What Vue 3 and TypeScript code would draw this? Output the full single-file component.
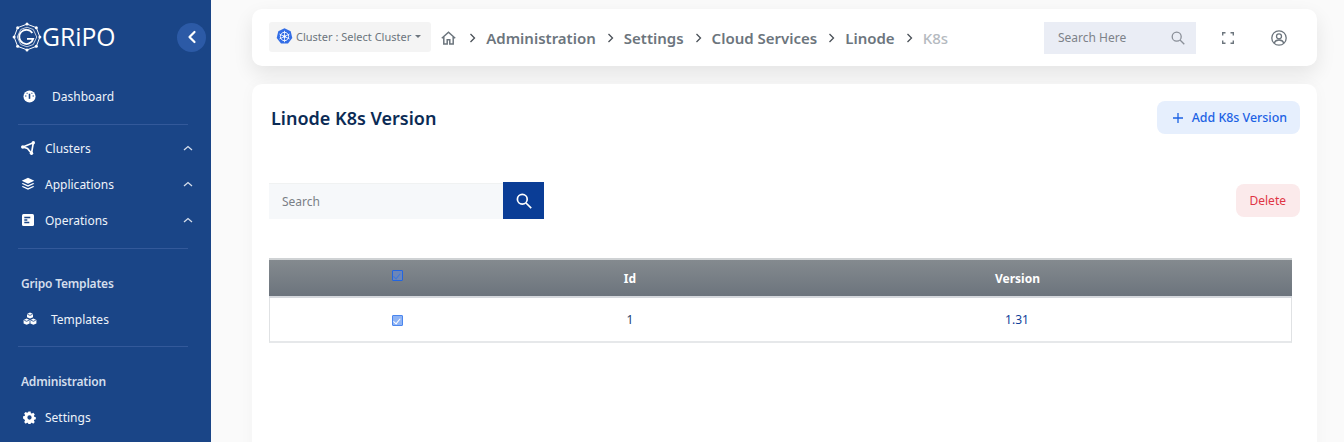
<template>
  <div class="app-shell">
    <aside class="sidebar">
      <div class="brand">
        <div class="logo">
          <svg width="32" height="32" viewBox="0 0 36 36" fill="none" stroke="#fff">
            <path d="M18 3.500 28.500 7.500 32.500 18 28.500 28.500 18 32.500 7.500 28.500 3.500 18 7.500 7.500Z" stroke-width="1.100" />
            <path d="M18 7 25 9.500 29 18 25 26.500 18 29 11 26.500 7 18 11 9.500Z" stroke-width="1" opacity=".8" />
            <path d="M24 13.500A8 8 0 1 0 25 20H18" stroke-width="2" />
            <g fill="#fff" stroke="none">
              <circle cx="18" cy="3.500" r="1.700" />
              <circle cx="28.500" cy="7.500" r="1.700" />
              <circle cx="32.500" cy="18" r="1.700" />
              <circle cx="28.500" cy="28.500" r="1.700" />
              <circle cx="18" cy="32.500" r="1.700" />
              <circle cx="7.500" cy="28.500" r="1.700" />
              <circle cx="3.500" cy="18" r="1.700" />
              <circle cx="7.500" cy="7.500" r="1.700" />
            </g>
          </svg>
          <span class="logo-text">GRiPO</span>
        </div>
        <button class="collapse">
          <svg width="12" height="14" viewBox="0 0 12 14" fill="none" stroke="#fff" stroke-width="2.200" stroke-linecap="round" stroke-linejoin="round">
            <path d="M8.500 2 3.500 7l5 5" />
          </svg>
        </button>
      </div>

      <div class="nav-item dashboard">
        <svg class="nav-icon" viewBox="0 0 14 14">
          <circle cx="7" cy="7" r="6.500" fill="#fff" />
          <path d="M7 9.500V4" stroke="#1a4587" stroke-width="1.700" />
          <path d="M2.200 6.500h1.500M10.300 6.500h1.500M4 3.200l.8.8M10 3.200l-.8.8" stroke="#1a4587" stroke-width="1.100" />
        </svg>
        <span>Dashboard</span>
      </div>
      <div class="divider"></div>

      <div class="nav-group">
        <div class="nav-item" v-for="item in groups" :key="item.label">
          <svg class="nav-icon small" viewBox="0 0 14 14" v-html="item.icon"></svg>
          <span>{{ item.label }}</span>
          <svg class="chevron" width="10" height="6" viewBox="0 0 10 6" fill="none" stroke="#d5deeb" stroke-width="1.300">
            <path d="M1 5 5 1.500 9 5" />
          </svg>
        </div>
      </div>
      <div class="divider second"></div>

      <div class="section-title">Gripo Templates</div>
      <div class="nav-item sub">
        <svg class="nav-icon" viewBox="0 0 14 14" fill="#fff">
          <path d="M7 .6l3 1.300v3.300L7 6.500 4 5.200V1.900Z" />
          <path d="M3.600 6.600l3 1.300v3.500l-3 1.300-3-1.300V7.900Z" />
          <path d="M10.400 6.600l3 1.300v3.500l-3 1.300-3-1.300V7.900Z" />
          <path d="M4.300 2.200 7 3.400l2.700-1.200M1.200 8.200l2.400 1.100L6 8.200M8 8.200l2.400 1.100 2.400-1.100" stroke="#1a4587" stroke-width=".8" fill="none" />
        </svg>
        <span>Templates</span>
      </div>
      <div class="divider third"></div>

      <div class="section-title admin">Administration</div>
      <div class="nav-item sub settings">
        <svg class="nav-icon" viewBox="0 0 14 14">
          <path fill="#fff" fill-rule="evenodd" d="M5.800 .6h2.400l.3 1.700 1.100.5 1.500-.9 1.600 1.800-1 1.400.4 1.200 1.700.3v2.400l-1.700.3-.4 1.100 1 1.500-1.700 1.700-1.400-1-1.200.4-.2 1.700H5.800l-.3-1.700-1.100-.4-1.500 1-1.700-1.700 1-1.500-.4-1.100L.1 8.100V5.700l1.700-.3.400-1.200-1-1.400 1.700-1.800 1.500.9 1.100-.5ZM7 4.700a2.300 2.300 0 1 0 0 4.600 2.300 2.300 0 0 0 0-4.600Z" />
        </svg>
        <span>Settings</span>
      </div>
    </aside>

    <main class="content">
      <header class="topbar">
        <div class="cluster">
          <svg class="k8s" width="17" height="17" viewBox="0 0 17 17">
            <path d="M8.500.3l6.200 3 1.600 6.700-4.300 5.600H5L.7 10l1.600-6.700Z" fill="#326de6" />
            <circle cx="8.500" cy="8.500" r="4.200" fill="none" stroke="#fff" stroke-width=".9" />
            <path d="M8.500 2.800v11.400M3.400 6l10.200 5M13.600 6 3.400 11" stroke="#fff" stroke-width=".8" />
            <circle cx="8.500" cy="8.500" r="1.300" fill="#fff" />
          </svg>
          <span>Cluster : Select Cluster</span>
          <i class="caret"></i>
        </div>
        <nav class="crumbs">
          <svg class="home" width="15" height="14" viewBox="0 0 15 14" fill="none" stroke="#6c757d" stroke-width="1.500">
            <path d="M.8 7.200 7.500 1.200l6.700 6" />
            <path d="M2.800 6v7h3.400V8.700h2.600V13h3.400V6" />
          </svg>
          <template v-for="(crumb, i) in crumbs" :key="crumb">
            <svg class="sep" width="7" height="10" viewBox="0 0 7 10" fill="none" stroke="#495057" stroke-width="1.300">
              <path d="M1.500 1 5.500 5l-4 4" />
            </svg>
            <span :class="{ last: i === crumbs.length - 1 }">{{ crumb }}</span>
          </template>
        </nav>
        <div class="top-search">
          <span>Search Here</span>
          <svg width="14" height="14" viewBox="0 0 14 14" fill="none" stroke="#8a8f98" stroke-width="1.300">
            <circle cx="5.700" cy="5.700" r="4.500" />
            <path d="m9 9 4.300 4.300" />
          </svg>
        </div>
        <svg class="fullscreen" width="12" height="12" viewBox="0 0 12 12" fill="none" stroke="#6c757d" stroke-width="1.400">
          <path d="M.7 3.500V.7h2.800M8.500.7h2.800v2.800M11.300 8.500v2.800H8.500M3.500 11.300H.7V8.500" />
        </svg>
        <svg class="user" width="16" height="16" viewBox="0 0 16 16" fill="none" stroke="#6c757d" stroke-width="1.300">
          <circle cx="8" cy="8" r="7.200" />
          <circle cx="8" cy="6.300" r="2.500" />
          <path d="M3.200 13c.8-2 2.600-3 4.800-3s4 1 4.800 3" />
        </svg>
      </header>

      <section class="card">
        <div class="card-head">
          <h1>Linode K8s Version</h1>
          <button class="btn-add">
            <svg class="plus" width="10" height="10" viewBox="0 0 10 10" stroke="#1c62e4" stroke-width="1.300">
              <path d="M5 0v10M0 5h10" />
            </svg>
            Add K8s Version
          </button>
        </div>
        <div class="tools">
          <div class="search-box">
            <div class="search-input">Search</div>
            <button class="search-btn">
              <svg width="16" height="16" viewBox="0 0 16 16" fill="none" stroke="#fff" stroke-width="1.700">
                <circle cx="6.300" cy="6.300" r="4.900" />
                <path d="m10 10 5.200 5.200" />
              </svg>
            </button>
          </div>
          <button class="btn-delete">Delete</button>
        </div>
        <table class="grid">
          <thead>
            <tr>
              <th class="col-check"><i class="check head-check"></i></th>
              <th class="col-id">Id</th>
              <th class="col-version">Version</th>
            </tr>
          </thead>
          <tbody>
            <tr v-for="row in rows" :key="row.id">
              <td><i class="check"></i></td>
              <td class="id">{{ row.id }}</td>
              <td class="version">{{ row.version }}</td>
            </tr>
          </tbody>
        </table>
      </section>
    </main>
  </div>
</template>

<script setup lang="ts">
const groups = [
  {
    label: 'Clusters',
    icon: '<path d="M1.800 6 12.300 1.800 10.500 12.300 6.500 7.500Z" fill="none" stroke="#fff" stroke-width="1.700"/><circle cx="1.800" cy="6" r="1.700" fill="#fff"/><circle cx="12.300" cy="1.800" r="1.700" fill="#fff"/><circle cx="10.500" cy="12.300" r="1.700" fill="#fff"/>'
  },
  {
    label: 'Applications',
    icon: '<path d="M7 .8l6.300 3L7 6.800.7 3.800Z" fill="#fff"/><path d="M1.900 5.900 7 8.300l5.100-2.400 1.200.9L7 9.800.7 6.800Z" fill="#fff"/><path d="M1.900 8.900 7 11.300l5.100-2.400 1.200.9L7 12.800.7 9.800Z" fill="#fff"/>'
  },
  {
    label: 'Operations',
    icon: '<rect x="1" y="1" width="12" height="12" rx="1.500" fill="#fff"/><path d="M3.300 4.500h6M3.300 7h3M3.300 9.500h5" stroke="#1a4587" stroke-width="1.300"/>'
  }
]

const crumbs = ['Administration', 'Settings', 'Cloud Services', 'Linode', 'K8s']

const rows = [{ id: 1, version: '1.31' }]
</script>

<style scoped>
.app-shell {
  display: flex;
  height: 442px;
  overflow: hidden;
  font-family: "Noto Sans", "Open Sans", sans-serif;
  background: #fafafa;
}
.sidebar {
  width: 211px;
  flex: none;
  background: #1a4587;
  color: #eef3fa;
  font-size: 12px;
}
.brand {
  display: flex;
  align-items: center;
  justify-content: space-between;
  height: 74px;
  padding: 0 5px 0 11px;
}
.logo {
  display: flex;
  align-items: center;
}
.logo-text {
  margin-left: -1px;
  color: #fff;
  font-family: "Open Sans", sans-serif;
  font-size: 24.700px;
  line-height: 1;
}
.collapse {
  width: 29px;
  height: 29px;
  padding: 0;
  border: none;
  border-radius: 50%;
  background: #2c5aa6;
  display: flex;
  align-items: center;
  justify-content: center;
}
.nav-item {
  display: flex;
  align-items: center;
  height: 36px;
  padding: 0 18px 0 21px;
}
.nav-icon {
  width: 14px;
  height: 14px;
  flex: none;
  margin-right: 10px;
}
.chevron {
  margin-left: auto;
}
.dashboard {
  height: 44px;
  padding-left: 23px;
}
.dashboard .nav-icon {
  width: 13px;
  height: 13px;
  margin-right: 16px;
}
.divider {
  height: 1px;
  margin: 6px 23px 0 18px;
  background: #33599a;
}
.nav-group {
  margin-top: 5px;
}
.divider.second {
  margin-top: 10px;
}
.section-title {
  margin: 26px 0 0 21px;
  height: 18px;
  line-height: 18px;
  font-weight: 600;
  letter-spacing: -0.2px;
  color: #d4deec;
}
.section-title.admin {
  margin-top: 26px;
}
.sub {
  margin-top: 8px;
  padding-left: 23px;
}
.sub .nav-icon {
  margin-right: 14px;
}
.divider.third {
  margin-top: 9px;
}
.settings .nav-icon {
  width: 13px;
  height: 13px;
  margin-right: 9px;
}
.content {
  flex: 1;
  min-width: 0;
  padding: 9px 27px 0 41px;
}
.topbar {
  display: flex;
  align-items: center;
  height: 57px;
  padding: 0 30px 0 17px;
  background: #fff;
  border-radius: 10px;
  box-shadow: 0 8px 20px rgba(0, 0, 0, 0.09);
}
.cluster {
  display: flex;
  align-items: center;
  height: 30px;
  margin-bottom: 1px;
  padding: 0 10px 2px 7px;
  box-sizing: border-box;
  background: #f4f4f4;
  border-radius: 3px;
  color: #6c757d;
  font-size: 11px;
}
.k8s {
  margin-right: 3px;
}
.caret {
  margin-left: 4px;
  border-top: 3px solid #6c757d;
  border-left: 3.500px solid transparent;
  border-right: 3.500px solid transparent;
}
.crumbs {
  display: flex;
  align-items: center;
  margin-left: 10px;
  color: #6c757d;
  font-size: 15px;
  font-weight: 600;
}
.home {
  margin-right: 13px;
}
.sep {
  margin-right: 10px;
}
.crumbs span {
  margin-right: 11px;
}
.crumbs .last {
  color: #b5bac0;
  font-weight: 500;
}
.top-search {
  display: flex;
  align-items: center;
  justify-content: space-between;
  width: 152px;
  height: 32px;
  margin-left: auto;
  padding: 0 11px 0 14px;
  box-sizing: border-box;
  background: #eaedf5;
  color: #7d8289;
  font-size: 12px;
}
.fullscreen {
  margin-left: 26px;
}
.user {
  margin-left: 37px;
}
.card {
  height: 400px;
  margin-top: 18px;
  padding: 17px 17px 0 17px;
  background: #fff;
  border-radius: 10px;
  box-shadow: 0 0 16px rgba(0, 0, 0, 0.03);
}
.card-head {
  display: flex;
  align-items: center;
  justify-content: space-between;
  height: 33px;
}
h1 {
  margin: 0 0 0 2px;
  color: #0b2b55;
  font-size: 18px;
  font-weight: 600;
}
button {
  font-family: inherit;
  cursor: pointer;
}
.btn-add {
  display: flex;
  align-items: center;
  height: 33px;
  padding: 0 13px 0 16px;
  border: none;
  border-radius: 8px;
  background: #e6effd;
  color: #1c62e4;
  font-size: 12.400px;
  font-weight: 500;
}
.plus {
  margin-right: 9px;
}
.tools {
  display: flex;
  align-items: center;
  justify-content: space-between;
  margin-top: 48px;
}
.search-box {
  display: flex;
  align-items: stretch;
}
.search-input {
  width: 234px;
  height: 36px;
  line-height: 36px;
  padding-left: 13px;
  box-sizing: border-box;
  background: #f6f8fa;
  color: #7a7f86;
  font-size: 12px;
  border-top: 1px solid #f0f2f2;
  margin-top: 1px;
}
.search-btn {
  display: flex;
  align-items: center;
  justify-content: center;
  width: 41px;
  height: 37px;
  padding: 0;
  border: none;
  background: #0a3d96;
}
.btn-delete {
  height: 33px;
  padding: 0 14px;
  border: none;
  border-radius: 8px;
  background: #fbeaeb;
  color: #e03444;
  font-size: 12px;
}
.grid {
  width: 1023px;
  margin-top: 39px;
  border-collapse: separate;
  border-spacing: 0;
  table-layout: fixed;
  font-size: 12px;
}
th {
  box-sizing: border-box;
  height: 40px;
  padding: 0;
  color: #fff;
  font-weight: 700;
  border-top: 2px solid #cfd2d4;
  border-bottom: 2px solid #d5d8dd;
  background: linear-gradient(#848a8f, #6c747d);
}
td {
  box-sizing: border-box;
  height: 45px;
  padding: 0;
  text-align: center;
  border-bottom: 2px solid #e6e8ea;
}
tr td:first-child {
  border-left: 1px solid #e0e2e4;
}
tr td:last-child {
  border-right: 1px solid #e0e2e4;
}
.col-check {
  width: 256px;
}
.col-id {
  width: 210px;
}
.col-version,
.version {
  padding-left: 8px;
}
.id {
  color: #24406e;
}
.version {
  color: #0f3f9a;
}
.check {
  position: relative;
  display: inline-block;
  width: 9px;
  height: 9px;
  background: #8fb4f5;
  border: 1px solid #4a86ee;
  border-radius: 1px;
  vertical-align: middle;
}
.check::after {
  content: "";
  position: absolute;
  left: 2px;
  top: 0.500px;
  width: 3px;
  height: 5.500px;
  border: solid #fff;
  border-width: 0 1.200px 1.200px 0;
  transform: rotate(40deg);
}
.head-check {
  background: #6c86b8;
  border-color: #2265e0;
  margin-bottom: 6px;
}
.head-check::after {
  border-color: #3f78d8;
}
</style>

<style>
html,
body {
  margin: 0;
  background: #fafafa;
}
</style>
